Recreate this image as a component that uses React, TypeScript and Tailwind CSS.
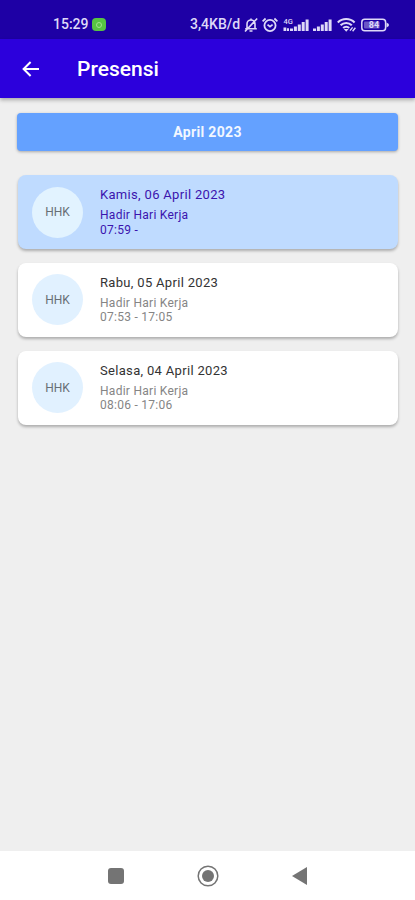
import { clsx } from 'clsx';

type Attendance = {
  id: number;
  code: string;
  date: string;
  status: string;
  time: string;
  active?: boolean;
};

const records: Attendance[] = [
  { id: 1, code: 'HHK', date: 'Kamis, 06 April 2023', status: 'Hadir Hari Kerja', time: '07:59 -', active: true },
  { id: 2, code: 'HHK', date: 'Rabu, 05 April 2023', status: 'Hadir Hari Kerja', time: '07:53 - 17:05' },
  { id: 3, code: 'HHK', date: 'Selasa, 04 April 2023', status: 'Hadir Hari Kerja', time: '08:06 - 17:06' },
];

function MutedBellIcon() {
  return (
    <svg width="14" height="16" viewBox="0 0 14 16" fill="none" stroke="currentColor" strokeWidth="1.6">
      <path d="M3 11.5V7a4 4 0 0 1 8 0v4.5M1.2 11.8h11.6M5.5 14h3M7 3V1.5M1 14.5 13.2 1.5" />
    </svg>
  );
}

function AlarmIcon() {
  return (
    <svg width="16" height="16" viewBox="0 0 16 16" fill="none" stroke="currentColor" strokeWidth="1.8">
      <circle cx="8" cy="8.5" r="5.6" />
      <path d="m5.5 7.6 2.5 2 2.6-2M.6 4.3 3.6 1.5M15.4 4.3l-3-2.8" />
    </svg>
  );
}

function SignalIcon({ label }: { label?: string }) {
  return (
    <svg width={label ? 26 : 19} height="16" viewBox={label ? '-7 0 26 16' : '0 0 19 16'} fill="currentColor">
      <path d="M0 11.4h3V14H0zM3.9 9.6h3V14h-3zM7.8 7.4h3V14h-3zM11.7 5h3v9h-3zM15.6 2.6h3V14h-3z" />
      {label && (
        <>
          <text x="-6.5" y="7" fontSize="7.5" fontWeight="500">
            {label}
          </text>
          <path d="M-6.5 10.5h2.8V14h-2.8zM-3 11.2h2V14h-2z" />
        </>
      )}
    </svg>
  );
}

function WifiIcon() {
  return (
    <svg width="20" height="16" viewBox="0 0 20 16" fill="none" stroke="currentColor" strokeWidth="2.1">
      <path d="M.8 5.4a12 12 0 0 1 16.8 0M3.6 8.3a8 8 0 0 1 11.2 0M6.2 11a4.2 4.2 0 0 1 6 0" />
      <path d="m9.2 14.8-2.4-2.8h4.8z" fill="currentColor" stroke="none" />
      <path d="m13 13.6 2.6-3.2M15.6 14.2l2.8-3.4" strokeWidth="1.4" />
    </svg>
  );
}

function BatteryIcon() {
  return (
    <svg width="28" height="14" viewBox="0 0 28 14">
      <rect x=".8" y="1.2" width="23.8" height="11.6" rx="3" fill="none" stroke="currentColor" strokeWidth="1.5" />
      <rect x="3" y="3.5" width="15.6" height="7" rx="1" fill="currentColor" opacity=".4" />
      <path d="M25.5 4.5 27.8 6v2l-2.3 1.5z" fill="currentColor" />
      <text x="13" y="10.2" textAnchor="middle" fontSize="9" fontWeight="700" fill="currentColor">
        84
      </text>
    </svg>
  );
}

function StatusBar() {
  return (
    <div className="flex h-[39px] items-center bg-[#1e00a5] pt-[10px] pl-[53px] text-[14px] font-medium text-[#ded9f8]">
      <span className="w-[36px]">15:29</span>
      <span className="ml-[3px] flex h-[13px] w-[14px] items-center justify-center rounded-[4px] bg-[#57c443]">
        <span className="h-[6px] w-[6px] rounded-full border border-[#a2e38f]" />
      </span>
      <span className="ml-[84px] w-[51px] whitespace-nowrap">3,4KB/d</span>
      <div className="ml-[3px] flex items-center">
        <MutedBellIcon />
        <span className="ml-[4px]"><AlarmIcon /></span>
        <span className="ml-[5px]"><SignalIcon label="4G" /></span>
        <span className="ml-[4px]"><SignalIcon /></span>
        <span className="ml-[5px]"><WifiIcon /></span>
        <span className="ml-[4px]"><BatteryIcon /></span>
      </div>
    </div>
  );
}

function AppBar() {
  return (
    <header className="flex h-[59px] items-center bg-[#2c00dc] pl-[22px] text-white shadow-[0_2px_4px_rgba(0,0,0,0.3)]">
      <button aria-label="Kembali">
        <svg width="17" height="16" viewBox="0 0 17 16" fill="none" stroke="currentColor" strokeWidth="2">
          <path d="M17 8H1.6M8.6 1 1.6 8l7 7" />
        </svg>
      </button>
      <h1 className="ml-[38px] pt-[2px] text-[21px] font-medium">Presensi</h1>
    </header>
  );
}

function AttendanceCard({ record }: { record: Attendance }) {
  return (
    <div
      className={clsx(
        'flex h-[74px] items-center rounded-[8px] pl-[14.5px] shadow-[0_2px_3px_rgba(0,0,0,0.28)]',
        record.active ? 'bg-[#bfdbff]' : 'bg-white',
      )}
    >
      <div
        className={clsx(
          'flex h-[51px] w-[51px] items-center justify-center rounded-full text-[12px] text-[#686f76]',
          record.active ? 'bg-[#e2f3ff]' : 'bg-[#e1f1ff]',
        )}
      >
        {record.code}
      </div>
      <div className="ml-[17px] pb-px">
        <p className={clsx('text-[13px] leading-[18px] tracking-[0.32px]', record.active ? 'text-[#3b14ae]' : 'text-[#333]')}>
          {record.date}
        </p>
        <div
          className={clsx(
            'mt-[4px] text-[12px] leading-[14.5px] tracking-[0.27px]',
            record.active ? 'text-[#3b14ae]' : 'text-[#858585]',
          )}
        >
          <p>{record.status}</p>
          <p>{record.time}</p>
        </div>
      </div>
    </div>
  );
}

function NavigationBar() {
  return (
    <nav className="flex h-[49px] items-center justify-center gap-[73px] bg-white text-[#747474]">
      <span className="h-[16px] w-[16px] rounded-[3px] bg-current" />
      <svg width="22" height="22" viewBox="0 0 22 22">
        <circle cx="11" cy="11" r="9.8" fill="none" stroke="currentColor" strokeWidth="1.5" />
        <circle cx="11" cy="11" r="6" fill="currentColor" />
      </svg>
      <svg width="15" height="18" viewBox="0 0 15 18" fill="currentColor">
        <path d="M15 0v18L0 9z" />
      </svg>
    </nav>
  );
}

export default function App() {
  return (
    <div className="flex h-[900px] w-[415px] flex-col overflow-hidden bg-[#efefef] font-['Roboto',sans-serif]">
      <StatusBar />
      <AppBar />
      <main className="flex-1 px-[17px] pt-[15px]">
        <button className="h-[38px] w-full rounded-[4px] bg-[#64a1ff] text-[14px] font-bold tracking-[0.35px] text-[#f2f7ff] shadow-[0_1px_3px_rgba(0,0,0,0.3)]">
          April 2023
        </button>
        <div className="mt-[24px] flex flex-col gap-[13.75px] pl-[0.5px]">
          {records.map((record) => (
            <AttendanceCard key={record.id} record={record} />
          ))}
        </div>
      </main>
      <NavigationBar />
    </div>
  );
}
